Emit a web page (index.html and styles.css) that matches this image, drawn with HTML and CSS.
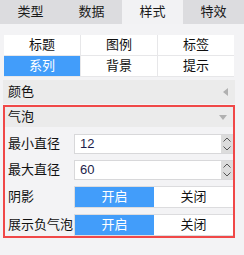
FILE: index.html
```html
<!DOCTYPE html>
<html>
<head>
<meta charset="utf-8">
<link rel="stylesheet" href="styles.css">
</head>
<body>
<div class="tabs">
  <div class="tab">类型</div>
  <div class="tab">数据</div>
  <div class="tab active">样式</div>
  <div class="tab">特效</div>
</div>
<div class="subgrid">
  <div class="cell">标题</div>
  <div class="cell">图例</div>
  <div class="cell">标签</div>
  <div class="cell sel">系列</div>
  <div class="cell">背景</div>
  <div class="cell">提示</div>
</div>
<div class="head color-head">
  <span>颜色</span>
  <svg class="tri" width="5" height="8" viewBox="0 0 5 8"><path d="M5 0 L0 4 L5 8 Z" fill="#b0b0b0"/></svg>
</div>
<div class="box">
  <div class="head bubble-head">
    <span>气泡</span>
    <svg class="tri" width="8" height="5" viewBox="0 0 8 5"><path d="M0 0 L8 0 L4 5 Z" fill="#b0b0b0"/></svg>
  </div>
  <div class="rows">
    <div class="row">
      <div class="label">最小直径</div>
      <div class="input"><span class="val">12</span>
        <div class="spin">
          <svg width="8" height="5" viewBox="0 0 8 5"><path d="M0.5 4.5 L4 1 L7.5 4.5" fill="none" stroke="#555" stroke-width="1"/></svg>
          <svg width="8" height="5" viewBox="0 0 8 5"><path d="M0.5 0.5 L4 4 L7.5 0.5" fill="none" stroke="#555" stroke-width="1"/></svg>
        </div>
      </div>
    </div>
    <div class="row">
      <div class="label">最大直径</div>
      <div class="input"><span class="val">60</span>
        <div class="spin">
          <svg width="8" height="5" viewBox="0 0 8 5"><path d="M0.5 4.5 L4 1 L7.5 4.5" fill="none" stroke="#555" stroke-width="1"/></svg>
          <svg width="8" height="5" viewBox="0 0 8 5"><path d="M0.5 0.5 L4 4 L7.5 0.5" fill="none" stroke="#555" stroke-width="1"/></svg>
        </div>
      </div>
    </div>
    <div class="row">
      <div class="label">阴影</div>
      <div class="toggle"><div class="opt on">开启</div><div class="opt">关闭</div></div>
    </div>
    <div class="row">
      <div class="label">展示负气泡</div>
      <div class="toggle"><div class="opt on">开启</div><div class="opt">关闭</div></div>
    </div>
  </div>
</div>
</body>
</html>
```

FILE: styles.css
```css
* { box-sizing: border-box; }
body {
  margin: 0;
  background: #f3f3f5;
  font-family: "Liberation Sans", "Noto Sans CJK SC", sans-serif;
  font-size: 13px;
  line-height: 16px;
  color: #111;
  width: 244px;
  height: 255px;
  overflow: hidden;
}
.tabs {
  display: flex;
  height: 24px;
  background: #dcdcdf;
}
.tab {
  flex: 1;
  display: flex;
  align-items: center;
  justify-content: center;
  color: #1a1a1a;
}
.tab.active { background: #f2f2f4; }
.subgrid {
  display: grid;
  grid-template-columns: 76px 76px 76px;
  grid-auto-rows: 20px;
  gap: 1px;
  width: 230px;
  margin: 11px 0 0 4px;
  background: #e7e7e9;
  border-bottom: 1px solid #e7e7e9;
}
.cell {
  background: #fff;
  display: flex;
  align-items: center;
  justify-content: center;
}
.cell.sel { background: #429dfa; color: #fff; }
.head {
  display: flex;
  align-items: center;
  justify-content: space-between;
  background: #ebebeb;
  padding: 0 6px 0 3px;
}
.color-head {
  margin: 3px 0 0 3px;
  width: 232px;
  height: 24px;
  padding-left: 5px;
  padding-right: 7px;
}
.bubble-head { height: 20px; }
.box {
  margin: 1px 0 0 3px;
  width: 232px;
  border: 2px solid #f04848;
}
.rows {
  display: flex;
  flex-direction: column;
  gap: 6px;
  padding-top: 7px;
}
.row {
  display: flex;
  align-items: center;
}
.label {
  width: 69px;
  padding-left: 3px;
  white-space: nowrap;
}
.input {
  flex: 1;
  height: 20px;
  background: #fff;
  border: 1px solid #d8d8da;
  border-right: none;
  display: flex;
  align-items: center;
  justify-content: space-between;
}
.val {
  padding-left: 5px;
  color: #1d1d4a;
}
.spin {
  width: 12px;
  height: 100%;
  background: #dcdcdc;
  display: flex;
  flex-direction: column;
  align-items: center;
  justify-content: space-around;
}
.spin svg { display: block; }
.toggle {
  flex: 1;
  height: 22px;
  display: flex;
  border: 1px solid #dcdcde;
  border-right: none;
  background: #fff;
}
.opt {
  flex: 1;
  display: flex;
  align-items: center;
  justify-content: center;
}
.opt.on { background: #429dfa; color: #fff; }
```
